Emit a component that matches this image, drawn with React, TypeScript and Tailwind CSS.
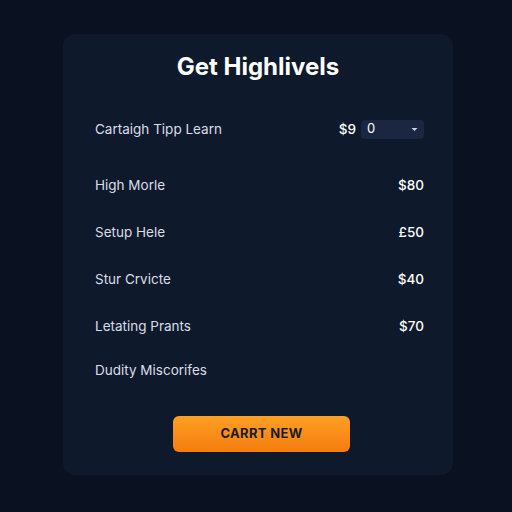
import React from 'react'

type Item = {
   label: string
   price?: string
}

const items: Item[] = [
   { label: 'High Morle', price: '$80' },
   { label: 'Setup Hele', price: '£50' },
   { label: 'Stur Crvicte', price: '$40' },
   { label: 'Letating Prants', price: '$70' },
   { label: 'Dudity Miscorifes' },
]

const App = () => {
   return (
      <div className="w-[512px] h-[512px] bg-[#0a1120] pt-[34px] font-['Inter','Open_Sans',sans-serif]">
         <div className="ml-[63px] w-[390px] h-[441px] rounded-xl bg-[#0f192c] pl-8 pr-[29px] pt-[52px] flex flex-col">
            {/* heading */}
            <h1 className="text-center text-white font-bold text-[24px] leading-[30px] -mt-[34px] mb-[37px] pr-[3px]">Get Highlivels</h1>

            {/* first row with select */}
            <div className="flex items-center justify-between h-[20px] text-[13.5px] text-[#d9dee6]">
               <span>Cartaigh Tipp Learn</span>
               <div className="flex items-center gap-[5px]">
                  <span className="text-white font-medium">$9</span>
                  <div className="w-[63px] h-[19px] rounded bg-[#1b2740] flex items-center justify-between px-1.5 text-white text-[13px]">
                     <span>0</span>
                     <svg width="7" height="5" viewBox="0 0 7 5"><path d="M0.5 1 L3.5 4 L6.5 1 Z" fill="#c9d1dc" /></svg>
                  </div>
               </div>
            </div>

            {/* price list */}
            <div className="flex flex-col mt-[36px]">
               {items.map((item, index) => (
                  <div key={index} className={`flex items-center justify-between h-[20px] text-[13.5px] text-[#d9dee6] ${index > 0 ? (index === 4 ? 'mt-[24px]' : 'mt-[27px]') : ''}`}>
                     <span>{item.label}</span>
                     {item.price && <span className="text-white font-medium">{item.price}</span>}
                  </div>
               ))}
            </div>

            <div className="flex justify-center mt-[36px] pl-[4px]">
               <button className="w-[177px] h-[36px] rounded-md bg-gradient-to-b from-[#fd9f24] to-[#f57d0c] text-[#1a1d24] font-bold text-[13px] tracking-wide">CARRT NEW</button>
            </div>
         </div>
      </div>
   )
}

export default App
